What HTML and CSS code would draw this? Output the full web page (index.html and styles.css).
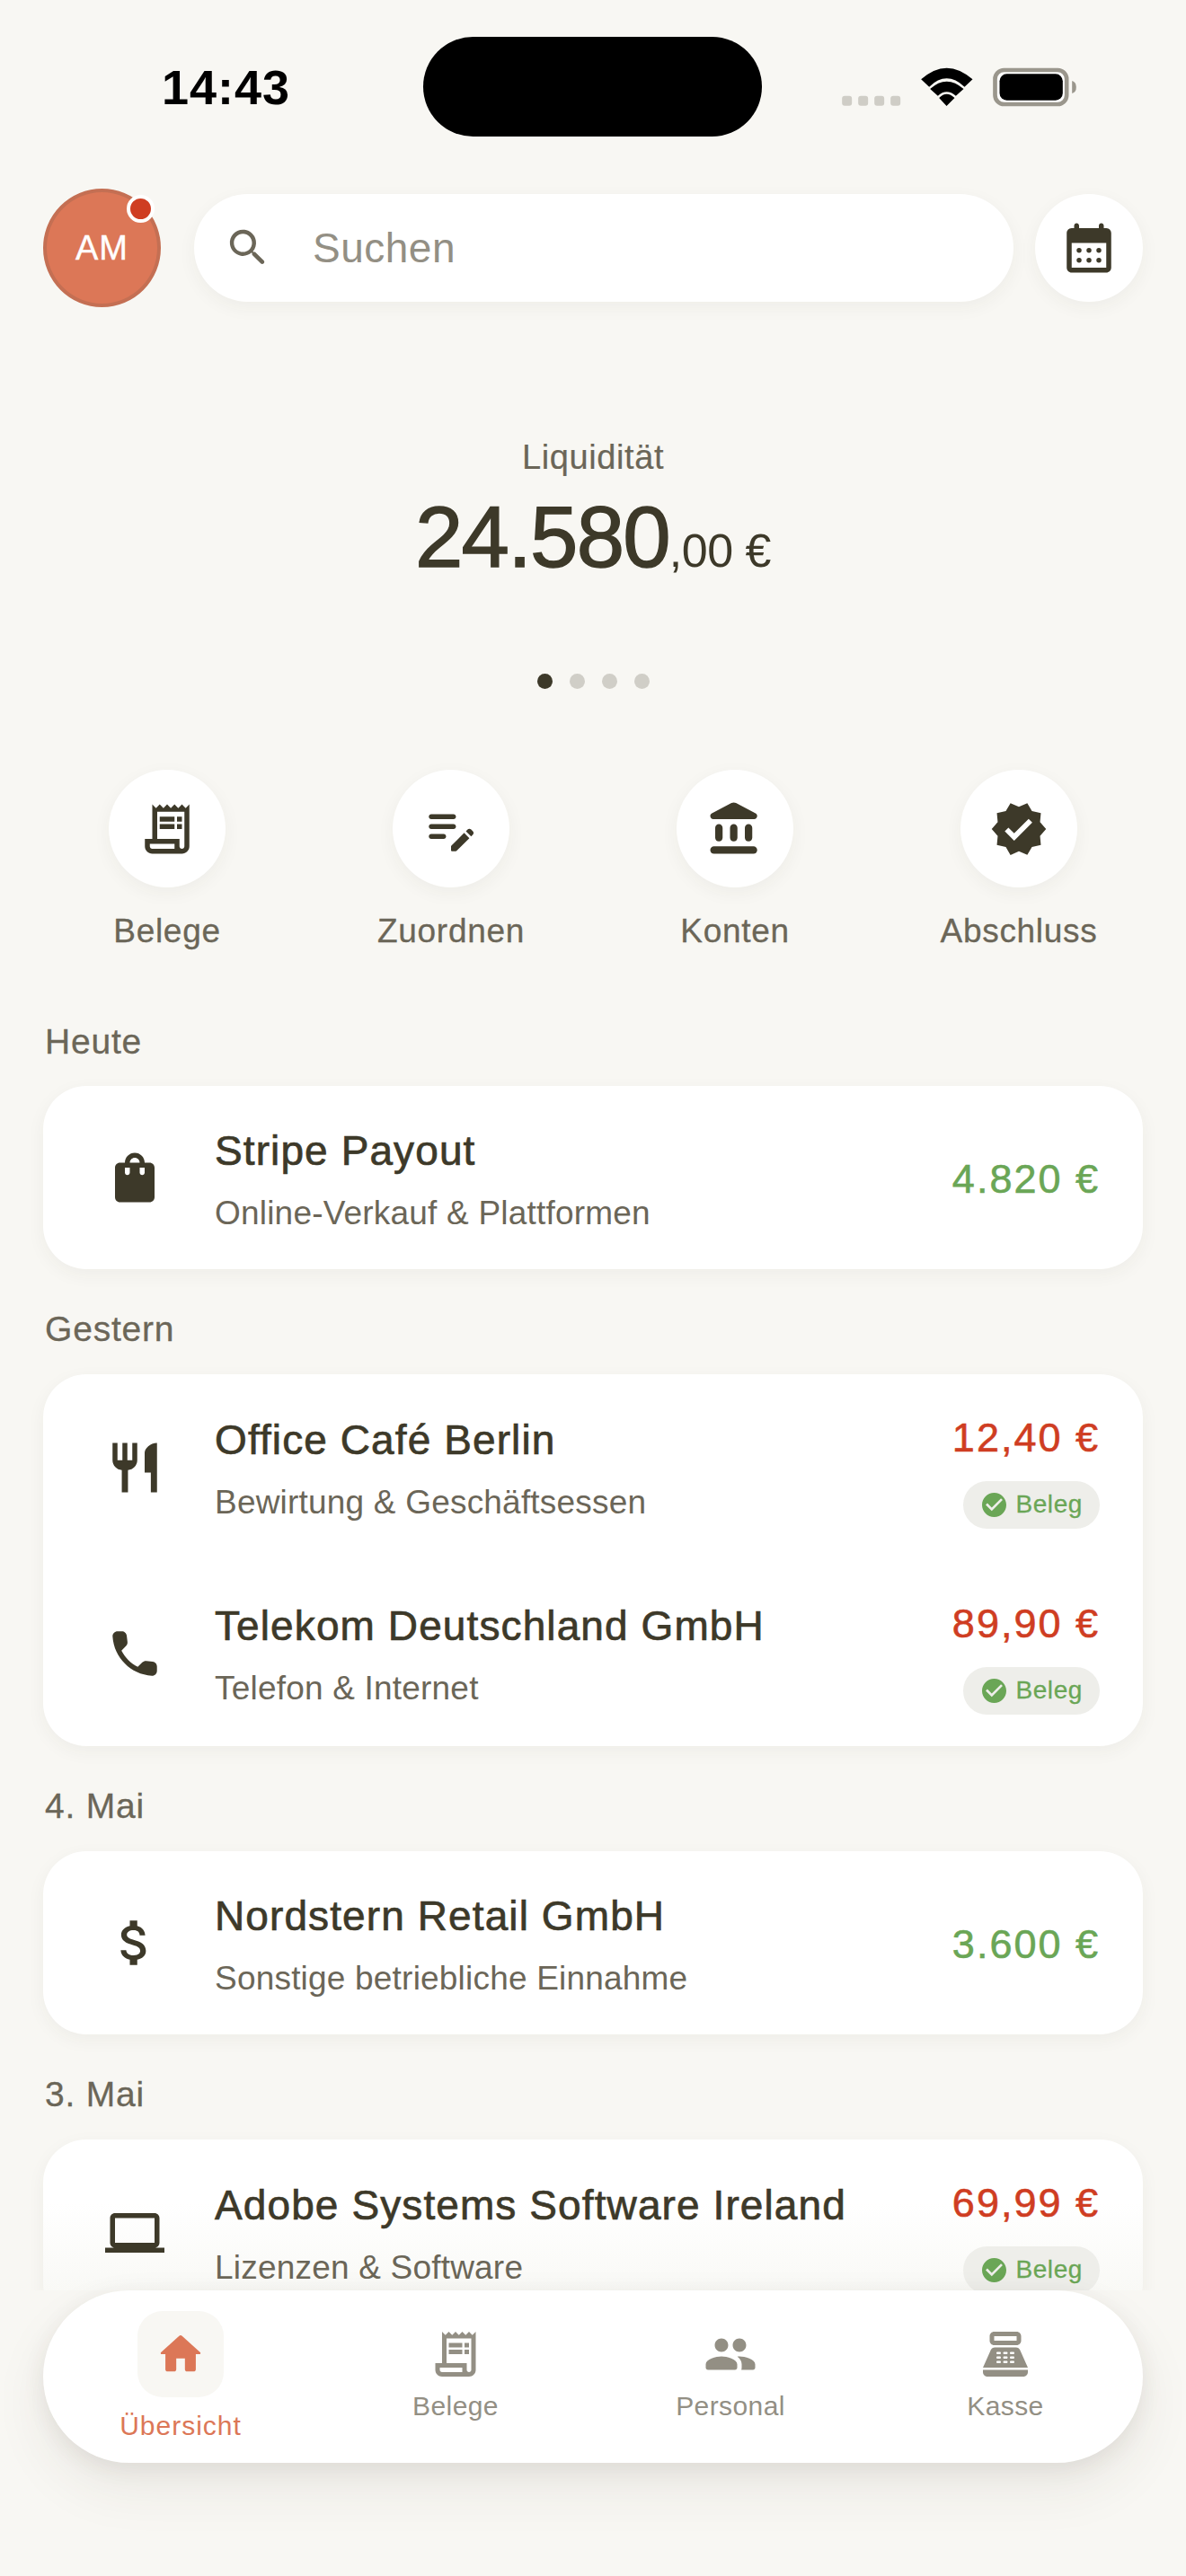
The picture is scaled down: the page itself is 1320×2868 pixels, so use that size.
FILE: index.html
```html
<!DOCTYPE html>
<html lang="de">
<head>
  <meta charset="UTF-8">
  <title>Übersicht</title>
  <link rel="stylesheet" href="styles.css">
</head>
<body>
  <div class="screen">
    <div class="scroll">
      <div class="status">
        <div class="time">14:43</div>
        <div class="island"></div>
        <svg class="status-icons" viewBox="111 100 785 135">
          <rect x="111" y="198" width="33" height="33" rx="9" fill="#cfcdc6"/>
          <rect x="165" y="198" width="33" height="33" rx="9" fill="#cfcdc6"/>
          <rect x="219" y="198" width="33" height="33" rx="9" fill="#cfcdc6"/>
          <rect x="273" y="198" width="33" height="33" rx="9" fill="#cfcdc6"/>
          <path d="M375 143Q460 67 547 143L520 168Q460 112 402 168ZM405 175Q460 125 517 175L491 198Q460 172 431 198ZM435 205Q460 179 487 205L460 232Z"/>
          <rect x="622" y="112" width="239" height="114" rx="30" fill="#fff" stroke="#9a968c" stroke-width="14"/>
          <rect x="637" y="125" width="211" height="88" rx="24"/>
          <path d="M879 148Q893 152 893 169Q893 186 879 190Z" fill="#9a968c"/>
        </svg>
      </div>

      <div class="header">
        <div class="avatar">AM<span class="avatar-dot"></span></div>
        <div class="search">
          <svg class="search-icon" viewBox="0 0 24 24"><path d="M15.5 14h-.79l-.28-.27c1.2-1.4 1.82-3.31 1.48-5.34-.47-2.78-2.79-5-5.59-5.34-4.2-.52-7.74 3.01-7.22 7.22.34 2.8 2.56 5.12 5.34 5.59 2.03.34 3.94-.28 5.34-1.48l.27.28v.79l4.25 4.25c.41.41 1.08.41 1.49 0 .41-.41.41-1.08 0-1.49L15.5 14zm-6 0C7.01 14 5 11.99 5 9.5S7.01 5 9.5 5 14 7.01 14 9.5 11.99 14 9.5 14z"/></svg>
          <span>Suchen</span>
        </div>
        <div class="round-btn">
          <svg class="icon" viewBox="0 0 24 24"><path d="M19 4h-1V3c0-.55-.45-1-1-1s-1 .45-1 1v1H8V3c0-.55-.45-1-1-1s-1 .45-1 1v1H5c-1.1 0-2 .9-2 2v14c0 1.1.9 2 2 2h14c1.1 0 2-.9 2-2V6c0-1.1-.9-2-2-2zm0 16H5V10h14v10z"/><circle cx="8" cy="13" r="1"/><circle cx="12" cy="13" r="1"/><circle cx="16" cy="13" r="1"/><circle cx="8" cy="17" r="1"/><circle cx="12" cy="17" r="1"/><circle cx="16" cy="17" r="1"/></svg>
        </div>
      </div>

      <div class="hero">
        <div class="hero-label">Liquidität</div>
        <div class="hero-amount">24.580<span class="hero-cents">,00 €</span></div>
        <div class="dots">
          <span class="dot dot-active"></span>
          <span class="dot"></span>
          <span class="dot"></span>
          <span class="dot"></span>
        </div>
      </div>

      <div class="actions">
        <div class="action">
          <div class="round-btn">
            <svg class="icon" viewBox="0 0 24 24"><path d="M19.5 3.5 18 2l-1.5 1.5L15 2l-1.5 1.5L12 2l-1.5 1.5L9 2 7.5 3.5 6 2v14H3v3c0 1.66 1.34 3 3 3h12c1.66 0 3-1.34 3-3V2l-1.5 1.5zM15 20H6c-.55 0-1-.45-1-1v-1h10v2zm4-1c0 .55-.45 1-1 1s-1-.45-1-1v-3H8V5h11v14z"/><path d="M9 7h6v2H9zm7 0h2v2h-2zm-7 3h6v2H9zm7 0h2v2h-2z"/></svg>
          </div>
          <div class="action-label">Belege</div>
        </div>
        <div class="action">
          <div class="round-btn">
            <svg class="icon" viewBox="0 0 24 24"><path d="M14 11c0 .55-.45 1-1 1H4c-.55 0-1-.45-1-1s.45-1 1-1h9c.55 0 1 .45 1 1zM3 7c0 .55.45 1 1 1h9c.55 0 1-.45 1-1s-.45-1-1-1H4c-.55 0-1 .45-1 1zm7 8c0-.55-.45-1-1-1H4c-.55 0-1 .45-1 1s.45 1 1 1h5c.55 0 1-.45 1-1zm8.01-2.13.71-.71c.39-.39 1.02-.39 1.41 0l.71.71c.39.39.39 1.02 0 1.41l-.71.71-2.12-2.12zm-.71.71-5.16 5.16c-.09.09-.14.22-.14.35v1.41c0 .28.22.5.5.5h1.41c.13 0 .26-.05.35-.15l5.16-5.16-2.12-2.12z"/></svg>
          </div>
          <div class="action-label">Zuordnen</div>
        </div>
        <div class="action">
          <div class="round-btn">
            <svg class="icon" viewBox="0 0 24 24"><path d="M4 11.5v4c0 .83.67 1.5 1.5 1.5S7 16.33 7 15.5v-4c0-.83-.67-1.5-1.5-1.5S4 10.67 4 11.5zm6 0v4c0 .83.67 1.5 1.5 1.5s1.5-.67 1.5-1.5v-4c0-.83-.67-1.5-1.5-1.5s-1.5.67-1.5 1.5zM3.5 22h16c.83 0 1.5-.67 1.5-1.5s-.67-1.5-1.5-1.5h-16c-.83 0-1.5.67-1.5 1.5S2.67 22 3.5 22zM16 11.5v4c0 .83.67 1.5 1.5 1.5s1.5-.67 1.5-1.5v-4c0-.83-.67-1.5-1.5-1.5s-1.5.67-1.5 1.5zM10.57 1.49l-7.9 4.16c-.41.21-.67.64-.67 1.1C2 7.44 2.56 8 3.25 8h16.51C20.44 8 21 7.44 21 6.75c0-.46-.26-.89-.67-1.1l-7.9-4.16c-.58-.31-1.28-.31-1.86 0z"/></svg>
          </div>
          <div class="action-label">Konten</div>
        </div>
        <div class="action">
          <div class="round-btn">
            <svg class="icon" viewBox="0 0 24 24"><path d="M23 12l-2.44-2.79.34-3.69-3.61-.82-1.89-3.2L12 2.96 8.6 1.5 6.71 4.69 3.1 5.5l.34 3.7L1 12l2.44 2.79-.34 3.7 3.61.82L8.6 22.5l3.4-1.47 3.4 1.46 1.89-3.19 3.61-.82-.34-3.69L23 12zm-12.91 4.72-3.8-3.81 1.48-1.48 2.32 2.33 5.85-5.87 1.48 1.48-7.33 7.35z"/></svg>
          </div>
          <div class="action-label">Abschluss</div>
        </div>
      </div>

      <div class="day day-first">Heute</div>
      <div class="card">
        <div class="row">
          <svg class="icon" viewBox="0 0 24 24"><path d="M18 6h-2c0-2.21-1.79-4-4-4S8 3.79 8 6H6c-1.1 0-2 .9-2 2v12c0 1.1.9 2 2 2h12c1.1 0 2-.9 2-2V8c0-1.1-.9-2-2-2zm-8 4c0 .55-.45 1-1 1s-1-.45-1-1V8h2v2zm2-6c1.1 0 2 .9 2 2h-4c0-1.1.9-2 2-2zm4 6c0 .55-.45 1-1 1s-1-.45-1-1V8h2v2z"/></svg>
          <div class="row-text">
            <div class="row-title">Stripe Payout</div>
            <div class="row-sub">Online-Verkauf &amp; Plattformen</div>
          </div>
          <div class="row-right">
            <div class="amount amount-in">4.820 €</div>
          </div>
        </div>
      </div>

      <div class="day">Gestern</div>
      <div class="card">
        <div class="row row-tall">
          <svg class="icon" viewBox="0 0 24 24"><path d="M11 9H9V2H7v7H5V2H3v7c0 2.12 1.66 3.84 3.75 3.97V22h2.5v-9.03C11.34 12.84 13 11.12 13 9V2h-2v7zm5-3v8h2.5v8H21V2c-2.76 0-5 2.24-5 4z"/></svg>
          <div class="row-text">
            <div class="row-title">Office Café Berlin</div>
            <div class="row-sub">Bewirtung &amp; Geschäftsessen</div>
          </div>
          <div class="row-right">
            <div class="amount amount-out">12,40 €</div>
            <div class="receipt">
              <svg viewBox="2 2 20 20"><path d="M12 2C6.48 2 2 6.48 2 12s4.48 10 10 10 10-4.48 10-10S17.52 2 12 2zm-2 15-5-5 1.41-1.41L10 14.17l7.59-7.59L19 8l-9 9z"/></svg>
              Beleg
            </div>
          </div>
        </div>
        <div class="row row-tall">
          <svg class="icon" viewBox="0 0 24 24"><path d="M19.23 15.26l-2.54-.29c-.61-.07-1.21.14-1.64.57l-1.84 1.84c-2.83-1.44-5.15-3.75-6.59-6.59l1.85-1.85c.43-.43.64-1.03.57-1.64l-.29-2.52c-.12-1.01-.97-1.77-1.99-1.77H5.03c-1.13 0-2.07.94-2 2.07.53 8.54 7.36 15.36 15.89 15.89 1.13.07 2.07-.87 2.07-2v-1.73c.01-1.01-.75-1.86-1.76-1.98z"/></svg>
          <div class="row-text">
            <div class="row-title">Telekom Deutschland GmbH</div>
            <div class="row-sub">Telefon &amp; Internet</div>
          </div>
          <div class="row-right">
            <div class="amount amount-out">89,90 €</div>
            <div class="receipt">
              <svg viewBox="2 2 20 20"><path d="M12 2C6.48 2 2 6.48 2 12s4.48 10 10 10 10-4.48 10-10S17.52 2 12 2zm-2 15-5-5 1.41-1.41L10 14.17l7.59-7.59L19 8l-9 9z"/></svg>
              Beleg
            </div>
          </div>
        </div>
      </div>

      <div class="day">4. Mai</div>
      <div class="card">
        <div class="row">
          <svg class="icon" viewBox="0 0 24 24"><path d="M11.8 10.9c-2.27-.59-3-1.2-3-2.15 0-1.09 1.01-1.85 2.7-1.85 1.78 0 2.44.85 2.5 2.1h2.21c-.07-1.72-1.12-3.3-3.21-3.81V3h-3v2.16c-1.94.42-3.5 1.68-3.5 3.61 0 2.31 1.91 3.46 4.7 4.13 2.5.6 3 1.48 3 2.41 0 .69-.49 1.79-2.7 1.79-2.06 0-2.87-.92-2.98-2.1h-2.2c.12 2.19 1.76 3.42 3.68 3.83V21h3v-2.15c1.95-.37 3.5-1.5 3.5-3.55 0-2.84-2.43-3.81-4.7-4.4z"/></svg>
          <div class="row-text">
            <div class="row-title">Nordstern Retail GmbH</div>
            <div class="row-sub">Sonstige betriebliche Einnahme</div>
          </div>
          <div class="row-right">
            <div class="amount amount-in">3.600 €</div>
          </div>
        </div>
      </div>

      <div class="day">3. Mai</div>
      <div class="card card-fading">
        <div class="row row-tall">
          <svg class="icon" viewBox="0 0 24 24"><path d="M20 18c1.1 0 1.99-.9 1.99-2L22 6c0-1.1-.9-2-2-2H4c-1.1 0-2 .9-2 2v10c0 1.1.9 2 2 2H0v2h24v-2h-4zM4 6h16v10H4V6z"/></svg>
          <div class="row-text">
            <div class="row-title">Adobe Systems Software Ireland</div>
            <div class="row-sub">Lizenzen &amp; Software</div>
          </div>
          <div class="row-right">
            <div class="amount amount-out">69,99 €</div>
            <div class="receipt">
              <svg viewBox="2 2 20 20"><path d="M12 2C6.48 2 2 6.48 2 12s4.48 10 10 10 10-4.48 10-10S17.52 2 12 2zm-2 15-5-5 1.41-1.41L10 14.17l7.59-7.59L19 8l-9 9z"/></svg>
              Beleg
            </div>
          </div>
        </div>
      </div>
    </div>

    <div class="tabbar">
      <div class="tab tab-active">
        <div class="tab-pill">
          <svg viewBox="0 0 24 24"><path d="M10 19v-5h4v5c0 .55.45 1 1 1h3c.55 0 1-.45 1-1v-7h1.7c.46 0 .68-.57.33-.87L12.67 3.6c-.38-.34-.96-.34-1.34 0l-8.36 7.53c-.34.3-.13.87.33.87H5v7c0 .55.45 1 1 1h3c.55 0 1-.45 1-1z"/></svg>
        </div>
        <div class="tab-label">Übersicht</div>
      </div>
      <div class="tab">
        <svg viewBox="0 0 24 24"><path d="M19.5 3.5 18 2l-1.5 1.5L15 2l-1.5 1.5L12 2l-1.5 1.5L9 2 7.5 3.5 6 2v14H3v3c0 1.66 1.34 3 3 3h12c1.66 0 3-1.34 3-3V2l-1.5 1.5zM15 20H6c-.55 0-1-.45-1-1v-1h10v2zm4-1c0 .55-.45 1-1 1s-1-.45-1-1v-3H8V5h11v14z"/><path d="M9 7h6v2H9zm7 0h2v2h-2zm-7 3h6v2H9zm7 0h2v2h-2z"/></svg>
        <div class="tab-label">Belege</div>
      </div>
      <div class="tab">
        <svg viewBox="0 0 24 24"><path d="M16 11c1.66 0 2.99-1.34 2.99-3S17.66 5 16 5s-3 1.34-3 3 1.34 3 3 3zm-8 0c1.66 0 2.99-1.34 2.99-3S9.66 5 8 5 5 6.34 5 8s1.34 3 3 3zm0 2c-2.33 0-7 1.17-7 3.5V18c0 .55.45 1 1 1h12c.55 0 1-.45 1-1v-1.5c0-2.33-4.67-3.5-7-3.5zm8 0c-.29 0-.62.02-.97.05.02.01.03.03.04.04 1.14.83 1.93 1.94 1.93 3.41V18c0 .35-.07.69-.18 1H22c.55 0 1-.45 1-1v-1.5c0-2.33-4.67-3.5-7-3.5z"/></svg>
        <div class="tab-label">Personal</div>
      </div>
      <div class="tab">
        <svg viewBox="0 0 24 24"><path fill-rule="evenodd" d="M17 2H7c-1.1 0-2 .9-2 2v2c0 1.1.9 2 2 2h10c1.1 0 2-.9 2-2V4c0-1.1-.9-2-2-2zm0 4H7V4h10v2zm3 16H4c-1.1 0-2-.9-2-2v-1h20v1c0 1.1-.9 2-2 2zm-1.47-11.81A2.008 2.008 0 0 0 16.7 9H7.3c-.79 0-1.51.47-1.83 1.19L2 18h20l-3.47-7.81zM9.5 16h-1c-.28 0-.5-.22-.5-.5s.22-.5.5-.5h1c.28 0 .5.22.5.5s-.22.5-.5.5zm0-2h-1c-.28 0-.5-.22-.5-.5s.22-.5.5-.5h1c.28 0 .5.22.5.5s-.22.5-.5.5zm0-2h-1c-.28 0-.5-.22-.5-.5s.22-.5.5-.5h1c.28 0 .5.22.5.5s-.22.5-.5.5zm3 4h-1c-.28 0-.5-.22-.5-.5s.22-.5.5-.5h1c.28 0 .5.22.5.5s-.22.5-.5.5zm0-2h-1c-.28 0-.5-.22-.5-.5s.22-.5.5-.5h1c.28 0 .5.22.5.5s-.22.5-.5.5zm0-2h-1c-.28 0-.5-.22-.5-.5s.22-.5.5-.5h1c.28 0 .5.22.5.5s-.22.5-.5.5zm3 4h-1c-.28 0-.5-.22-.5-.5s.22-.5.5-.5h1c.28 0 .5.22.5.5s-.22.5-.5.5zm0-2h-1c-.28 0-.5-.22-.5-.5s.22-.5.5-.5h1c.28 0 .5.22.5.5s-.22.5-.5.5zm0-2h-1c-.28 0-.5-.22-.5-.5s.22-.5.5-.5h1c.28 0 .5.22.5.5s-.22.5-.5.5z"/></svg>
        <div class="tab-label">Kasse</div>
      </div>
    </div>
  </div>
</body>
</html>
```

FILE: styles.css
```css
* {
  box-sizing: border-box;
}
body {
  margin: 0;
  background: #f8f7f3;
  font-family: "Liberation Sans", Arial, sans-serif;
  color: #3d3929;
}
.screen {
  height: 2868px;
  overflow: hidden;
}
.scroll {
  height: 2550px;
  padding: 0 48px;
  overflow: hidden;
}
.icon {
  flex: none;
  width: 66px;
  height: 66px;
  fill: #3d3929;
}

/* status bar */
.status {
  display: flex;
  align-items: center;
  height: 210px;
  padding: 41px 0 58px 132px;
}
.time {
  width: 291px;
  color: #000;
  font-size: 54px;
  font-weight: bold;
  letter-spacing: 1px;
}
.island {
  width: 377px;
  height: 111px;
  background: #000;
  border-radius: 56px;
}
.status-icons {
  width: 262px;
  height: 45px;
  margin-left: 89px;
}

/* header */
.header {
  display: flex;
  align-items: center;
  gap: 24px;
}
.avatar {
  position: relative;
  flex: none;
  display: flex;
  align-items: center;
  justify-content: center;
  width: 131px;
  height: 132px;
  margin-right: 13px;
  background: #dc7757;
  border: 4px solid #c46f53;
  border-radius: 50%;
  color: #fff;
  font-size: 38px;
  letter-spacing: 1px;
  -webkit-text-stroke: 0.4px #fff;
}
.avatar-dot {
  position: absolute;
  top: 3px;
  left: 89px;
  width: 31px;
  height: 31px;
  background: #cf3d22;
  border: 4px solid #fff;
  border-radius: 50%;
}
.search {
  flex: 1;
  display: flex;
  align-items: center;
  gap: 45px;
  height: 120px;
  padding-left: 33px;
  background: #fff;
  border-radius: 60px;
  box-shadow: 0 6px 20px rgba(61, 57, 41, 0.05);
  color: #938f84;
  font-size: 46px;
  letter-spacing: 0.5px;
}
.search-icon {
  width: 54px;
  height: 54px;
  fill: #6b6658;
}
.round-btn {
  flex: none;
  display: flex;
  align-items: center;
  justify-content: center;
  width: 120px;
  height: 120px;
  background: #fff;
  border-radius: 50%;
  box-shadow: 0 6px 20px rgba(61, 57, 41, 0.05);
}

/* liquidity */
.hero {
  margin-top: 145px;
  text-align: center;
}
.hero-label {
  color: #6b6658;
  font-size: 38px;
  line-height: 44px;
  letter-spacing: 0.6px;
  -webkit-text-stroke: 0.2px #6b6658;
}
.hero-amount {
  margin-top: 12px;
  font-size: 96px;
  line-height: 110px;
  letter-spacing: -1.8px;
  -webkit-text-stroke: 1.4px #3d3929;
}
.hero-cents {
  font-size: 52px;
  line-height: 1;
  letter-spacing: -0.5px;
  -webkit-text-stroke: 0;
}
.dots {
  display: flex;
  justify-content: center;
  gap: 19px;
  margin-top: 97px;
}
.dot {
  width: 17px;
  height: 17px;
  background: #d0cec7;
  border-radius: 50%;
}
.dot-active {
  background: #3d3929;
}

/* quick actions */
.actions {
  display: grid;
  grid-template-columns: repeat(4, 1fr);
  gap: 40px;
  margin-top: 90px;
}
.action {
  display: flex;
  flex-direction: column;
  align-items: center;
}
.action .round-btn {
  width: 130px;
  height: 131px;
}
.action-label {
  margin-top: 27px;
  color: #6b6658;
  font-size: 37px;
  line-height: 44px;
  letter-spacing: 0.7px;
  -webkit-text-stroke: 0.3px #6b6658;
}

/* transactions */
.day {
  margin: 45px 0 28px 2px;
  color: #6b6658;
  font-size: 39px;
  line-height: 44px;
  letter-spacing: 0.8px;
  -webkit-text-stroke: 0.3px #6b6658;
}
.day-first {
  margin-top: 79px;
  margin-bottom: 27px;
}
.card {
  background: #fff;
  border-radius: 48px;
  box-shadow: 0 6px 20px rgba(61, 57, 41, 0.05);
}
.card-fading {
  background: linear-gradient(#fff 70px, #f9f9f6 168px);
}
.row {
  display: flex;
  align-items: center;
  gap: 56px;
  height: 204px;
  padding: 0 48px 0 69px;
}
.row-tall {
  height: 207px;
}
.row-text {
  flex: 1;
  padding-top: 5px;
}
.row-title {
  font-size: 46px;
  line-height: 52px;
  letter-spacing: 1.1px;
  -webkit-text-stroke: 0.7px #3d3929;
}
.row-sub {
  margin-top: 22px;
  color: #6b6658;
  font-size: 37px;
  line-height: 44px;
  letter-spacing: 0.2px;
}
.row-right {
  display: flex;
  flex-direction: column;
  align-items: flex-end;
  gap: 22px;
  padding-top: 3px;
}
.row-tall .row-right {
  padding-top: 9px;
}
.amount {
  font-size: 45px;
  line-height: 52px;
  letter-spacing: 2px;
  -webkit-text-stroke: 0.6px;
}
.amount-in {
  color: #6aa656;
}
.amount-out {
  color: #cf3d22;
}
.receipt {
  display: flex;
  align-items: center;
  gap: 10px;
  height: 53px;
  padding: 0 19px 0 21px;
  background: #eeeeea;
  border-radius: 27px;
  color: #6aa656;
  font-size: 28px;
  letter-spacing: 0.6px;
  -webkit-text-stroke: 0.3px #6aa656;
}
.receipt svg {
  width: 27px;
  height: 27px;
  fill: #6aa656;
}

/* tab bar */
.tabbar {
  position: relative;
  display: grid;
  grid-template-columns: repeat(4, 1fr);
  align-items: center;
  height: 192px;
  margin: 0 48px;
  background: #fff;
  border-radius: 96px;
  box-shadow: 0 6px 24px rgba(61, 57, 41, 0.08), 0 28px 60px rgba(61, 57, 41, 0.08);
}
.tab {
  display: flex;
  flex-direction: column;
  align-items: center;
  padding-bottom: 4px;
}
.tab svg {
  width: 60px;
  height: 60px;
  fill: #938f84;
}
.tab-label {
  margin-top: 10px;
  color: #938f84;
  font-size: 30px;
  line-height: 36px;
  letter-spacing: 0.4px;
}
.tab-active {
  padding-bottom: 0;
}
.tab-pill {
  display: flex;
  align-items: center;
  justify-content: center;
  width: 96px;
  height: 96px;
  background: #f8f7f3;
  border-radius: 28px;
}
.tab-active svg {
  width: 58px;
  height: 58px;
  fill: #dc7757;
}
.tab-active .tab-label {
  margin-top: 14px;
  color: #dc7757;
  letter-spacing: 1px;
}
```
